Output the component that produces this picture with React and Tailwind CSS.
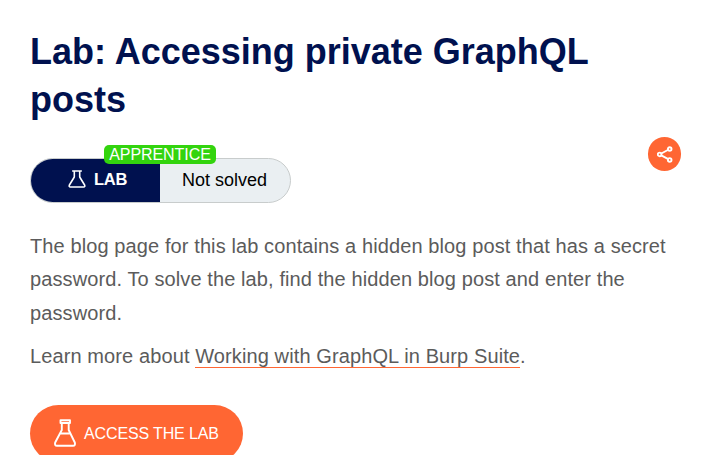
function Flask({ className, strokeWidth }) {
  return (
    <svg viewBox="0 0 22 28" className={className} fill="none" stroke="white" strokeWidth={strokeWidth} strokeLinejoin="round" strokeLinecap="round">
      <path d="M6.500 1.300h9.500v2.700h-9.500zM7.800 4v7L1.200 23.500Q.4 26.800 3 26.800h16q2.600 0 1.800-3.300L14.700 11V4M6.400 14.500h9.200" />
    </svg>
  );
}

function LabStatus() {
  return (
    <div className="relative w-[261px]">
      <div className="flex h-[45px] overflow-hidden rounded-full border border-[#c8cccc] bg-[#eaeff2]">
        <div className="flex w-[129px] items-center bg-[#00114f] pl-[37px] pb-[3px]">
          <svg viewBox="0 0 18 18" className="h-[18px] w-[18px]" fill="none" stroke="white" strokeWidth="1.600" strokeLinejoin="round" strokeLinecap="round">
            <path d="M4.700 1h8.600M6.300 1v6L1.400 15q-.8 2 1 2h13.200q1.800 0 1-2L11.700 7V1" />
          </svg>
          <span className="ml-[8px] text-[16.500px] leading-5 font-bold tracking-[-0.3px] text-white">LAB</span>
        </div>
        <span className="pl-[22px] text-[18px] leading-[42px] text-black">Not solved</span>
      </div>
      <span className="absolute -top-[13px] left-[74px] h-[19px] w-[112px] rounded-[5px] bg-[#33d40e] text-center text-[16px] leading-[19px] tracking-[-0.060px] text-white">APPRENTICE</span>
    </div>
  );
}

export default function App() {
  return (
    <main className="flex h-[455px] w-[719px] flex-col items-start overflow-hidden bg-white pl-[30px] font-['Liberation_Sans',Arial,sans-serif]">
      <h1 className="mt-[28px] w-[600px] text-[36px] leading-[48px] font-bold text-[#00114f]">Lab: Accessing private GraphQL posts</h1>
      <div className="mt-[13px] flex w-[651px] items-start justify-between">
        <div className="pt-[21px]">
          <LabStatus />
        </div>
        <button aria-label="Share" className="flex h-[34px] w-[33px] items-center justify-center rounded-full bg-[#ff6633]">
          <svg viewBox="0 0 16 17" className="h-[17px] w-4" fill="none" stroke="white" strokeWidth="1.900">
            <path d="M4.300 7.500l6.500-3.500M4.300 9.300l6.500 3.500" />
            <circle cx="2.600" cy="8.400" r="1.800" />
            <circle cx="12.700" cy="3" r="1.800" />
            <circle cx="12.700" cy="13.900" r="1.800" />
          </svg>
        </button>
      </div>
      <p className="mt-[27px] w-[650px] text-[20px] leading-[33.400px] tracking-[0.105px] text-[#5b5b5b]">
        The blog page for this lab contains a hidden blog post that has a secret password. To solve the lab, find the hidden blog post and enter the password.
      </p>
      <p className="mt-[9.500px] text-[20px] leading-[33.400px] tracking-[0.105px] text-[#5b5b5b]">
        Learn more about <a className="border-b border-[#ff6633]">Working with GraphQL in Burp Suite</a>.
      </p>
      <button className="mt-[31.900px] flex h-[57px] w-[213px] shrink-0 items-center rounded-full bg-[#ff6633] pl-[24px]">
        <Flask className="mb-[2px] h-[28px] w-[22px]" strokeWidth={1.9} />
        <span className="ml-[8px] text-[16px] tracking-[-0.130px] text-white">ACCESS THE LAB</span>
      </button>
    </main>
  );
}
